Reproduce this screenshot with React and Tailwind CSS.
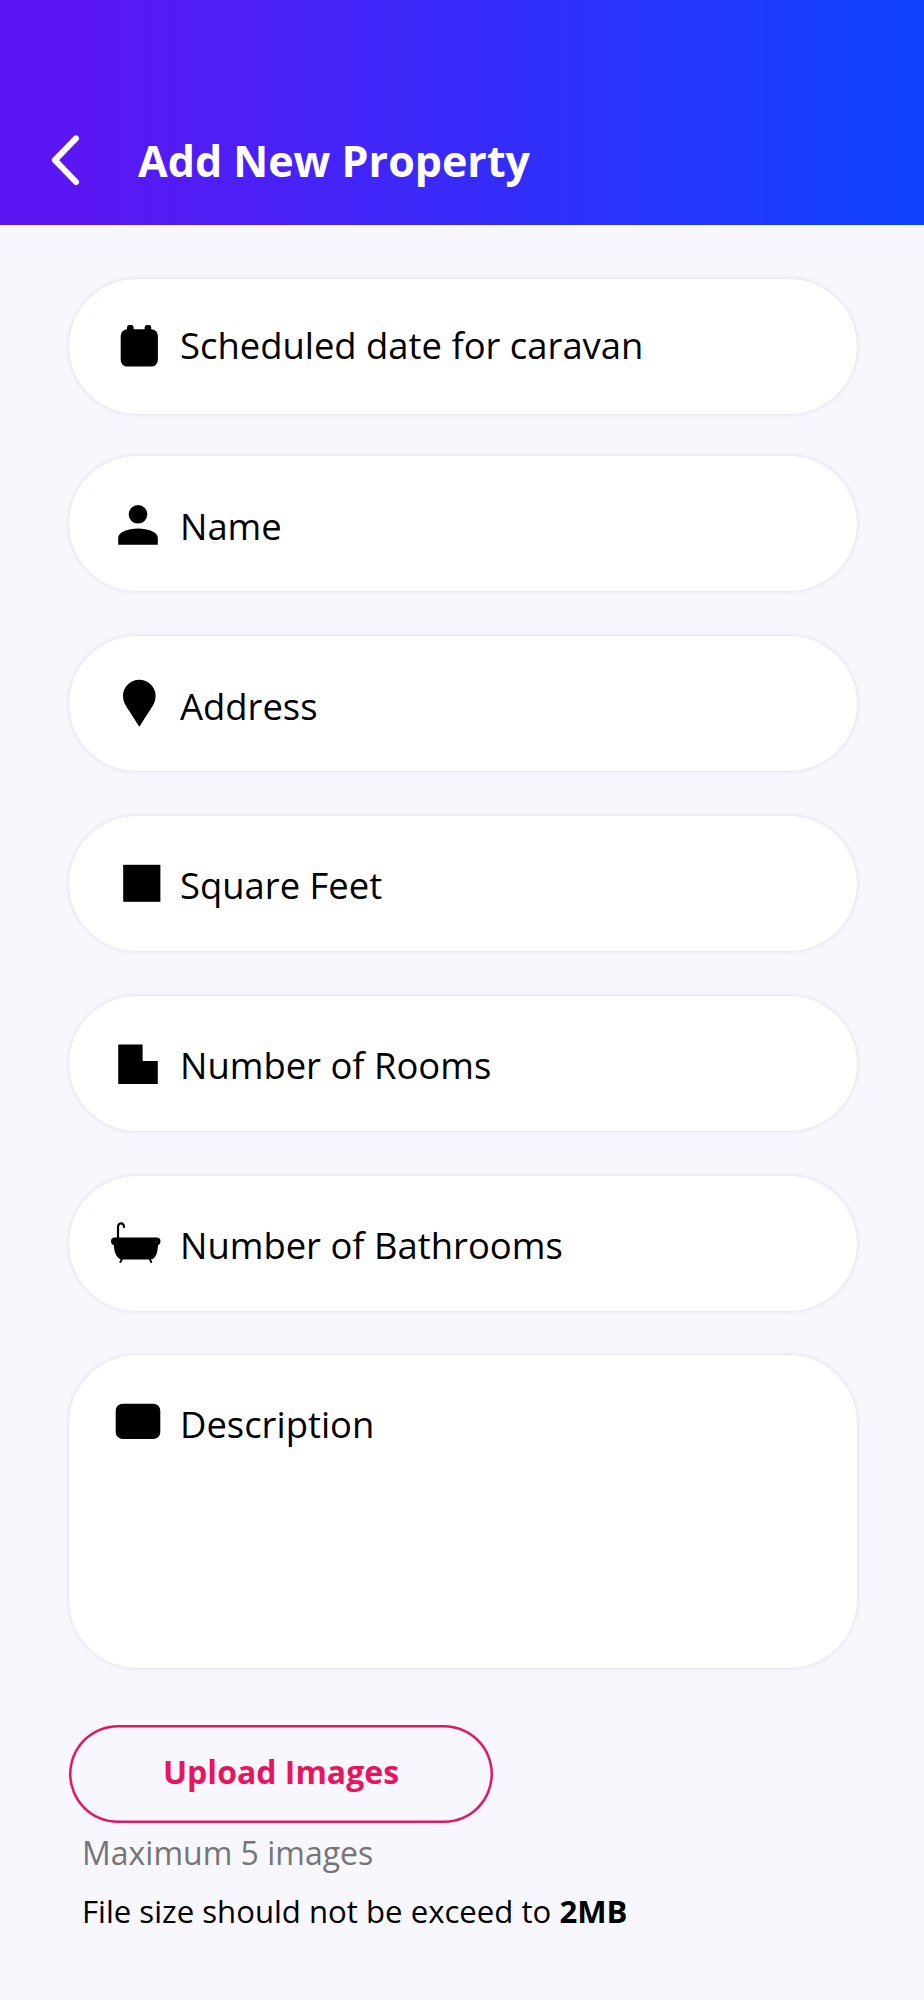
import clsx from 'clsx';

// All field icons share the same 56x56 slot so the labels line up
function FieldIcon({ children }) {
  return (
    <svg viewBox="0 0 56 56" className="size-14 shrink-0" fill="#000">
      {children}
    </svg>
  );
}

const CalendarIcon = () => (
  <FieldIcon>
    <rect x="12.7" y="12.3" width="37.2" height="37.3" rx="6.5" />
    <rect x="19" y="8" width="6.6" height="10" rx="2.4" />
    <rect x="36.6" y="8" width="6.6" height="10" rx="2.4" />
  </FieldIcon>
);

const PersonIcon = () => (
  <FieldIcon>
    <circle cx="30" cy="17.3" r="9.3" />
    <path d="M10.2 47.7V40C11 35.5 19.5 31.6 30 31.6S49 35.5 49.8 40V47.7Z" />
  </FieldIcon>
);

const PinIcon = () => (
  <FieldIcon>
    <path d="M31.3 49.7L18.3 29.5C16.2 26.2 15 22.8 15 19A16.3 16.3 0 0 1 47.6 19C47.6 22.8 46.4 26.2 44.3 29.5Z" />
  </FieldIcon>
);

const SquareIcon = () => (
  <FieldIcon>
    <rect x="15.2" y="7.8" width="37.2" height="37" />
  </FieldIcon>
);

const RoomsIcon = () => (
  <FieldIcon>
    <path d="M10.2 7.6H34.6V24H49.8V47H10.2Z" />
  </FieldIcon>
);

const BathIcon = () => (
  <FieldIcon>
    <path
      d="M10 22V10.5C10 4.9 16 5.1 16 9.9"
      fill="none"
      stroke="#000"
      strokeWidth="2.2"
      strokeLinecap="round"
    />
    <path d="M6.6 20.6H48.9C51.2 20.6 52.5 22.2 52.5 24.2C52.5 26.2 51.6 27.6 50 28.2C49.6 35.5 48 42.6 41.5 42.6H15.2C8.7 42.6 6.2 35.5 5.8 28.2C4.1 27.6 3 26.2 3 24.2C3 22.2 4.3 20.6 6.6 20.6Z" />
    <path d="M14 41.8L12.4 45M41.8 41.8L43.2 45" stroke="#000" strokeWidth="2" strokeLinecap="round" />
  </FieldIcon>
);

const DescriptionIcon = () => (
  <FieldIcon>
    <rect x="7.7" y="8.7" width="44.6" height="35.3" rx="7" />
  </FieldIcon>
);

const fields = [
  { label: 'Name', icon: PersonIcon },
  { label: 'Address', icon: PinIcon },
  { label: 'Square Feet', icon: SquareIcon },
  { label: 'Number of Rooms', icon: RoomsIcon },
  { label: 'Number of Bathrooms', icon: BathIcon },
];

function Field({ label, icon: Icon, className }) {
  return (
    <div
      className={clsx(
        'flex gap-4 rounded-[68px] bg-white pl-[39px] shadow-[0_0_4px_rgba(50,40,70,0.15)]',
        className
      )}
    >
      <Icon />
      <span className="pt-px text-[36.4px] leading-[56px] whitespace-nowrap">{label}</span>
    </div>
  );
}

export default function App() {
  return (
    <div className="min-h-[2000px] bg-[#f8f7fd] font-['Open_Sans',sans-serif] text-black">
      <header className="flex h-[224.5px] items-start bg-linear-to-r/srgb from-[#5a17f3] from-10% to-[#0f41ff] to-98% pt-[133px] pl-[50px] text-white">
        <button type="button" aria-label="Back">
          <svg width="32" height="54" viewBox="0 0 32 54" fill="none">
            <path
              d="M26 5.4L4.9 27.2L26 49"
              stroke="#fff"
              strokeWidth="6"
              strokeLinecap="round"
              strokeLinejoin="round"
            />
          </svg>
        </button>
        <h1 className="ml-14 pt-px text-[43px] leading-[54px] font-bold whitespace-nowrap">
          Add New Property
        </h1>
      </header>

      <main className="pt-[54px] pr-[67px] pl-[69px]">
        <Field
          label="Scheduled date for caravan"
          icon={CalendarIcon}
          className="mb-[42px] h-[135.5px] items-center pb-[3px]"
        />
        <div className="flex flex-col gap-[44.5px]">
          {fields.map((field) => (
            <Field key={field.label} {...field} className="h-[135.4px] items-center pt-[3px]" />
          ))}
          <Field
            label="Description"
            icon={DescriptionIcon}
            className="h-[312.5px] items-start pt-[40px]"
          />
        </div>

        <button
          type="button"
          className="mt-[57px] flex h-[98.5px] w-[424px] items-center justify-center rounded-full pb-1 text-[32px] font-bold text-[#e8145f] shadow-[inset_0_0_0_2.5px_#e8145f]"
        >
          Upload Images
        </button>

        <div className="pl-[13px] whitespace-nowrap">
          <p className="mt-[8px] text-[32px] leading-[44px] text-[#757575]">Maximum 5 images</p>
          <p className="mt-[14px] text-[31.15px] leading-[44px]">
            File size should not be exceed to <b className="font-bold">2MB</b>
          </p>
        </div>
      </main>
    </div>
  );
}
